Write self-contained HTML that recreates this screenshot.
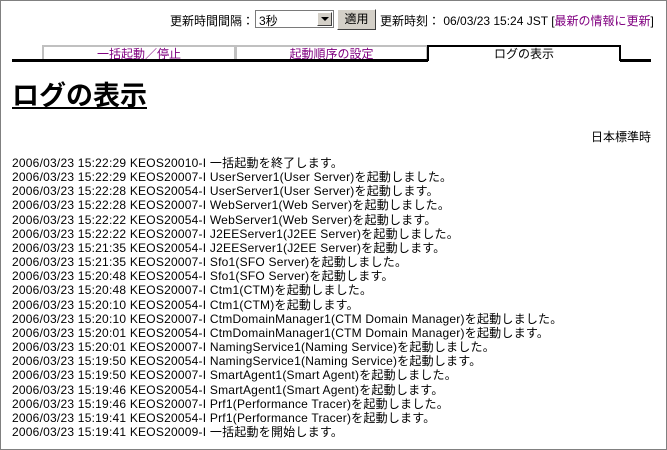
<!DOCTYPE html>
<html><head><meta charset="utf-8"><style>
html,body{margin:0;padding:0;background:#fff;}
body{width:667px;height:450px;position:relative;overflow:hidden;font-family:"Liberation Sans","Noto Sans CJK JP",sans-serif;font-size:12px;color:#000;}
.frame{position:absolute;left:0;top:0;width:665px;height:448px;border:1px solid #808080;}
.a{position:absolute;white-space:nowrap;}
.sel{position:absolute;left:255px;top:10px;width:79px;height:18px;border:1px solid #7a7a7a;box-sizing:border-box;background:#fff;}
.sel span{position:absolute;left:3px;top:1px;}
.sel i{position:absolute;right:1px;top:1px;width:15px;height:14px;background:#d4d0c8;border:1px solid;border-color:#fff #404040 #404040 #fff;box-sizing:border-box;}
.sel i:after{content:"";position:absolute;left:3px;top:4px;border-left:4px solid transparent;border-right:4px solid transparent;border-top:4px solid #000;}
.btn{position:absolute;left:337px;top:9px;width:39px;height:21px;background:#d4d0c8;border:1px solid;border-color:#fff #404040 #404040 #fff;box-sizing:border-box;text-align:center;line-height:18px;}
.p{color:#800080;}
.tab{position:absolute;top:45px;height:15px;border:2px solid #c0c0c0;border-bottom:none;text-align:center;line-height:14px;box-sizing:border-box;color:#800080;}
.log{position:absolute;left:12px;top:156px;line-height:14.15px;white-space:pre;letter-spacing:0.22px;}
</style></head><body>
<div class="frame"></div>
<div class="a" style="left:170px;top:12px;">更新時間間隔：</div>
<div class="sel"><span>3秒</span><i></i></div>
<div class="btn">適用</div>
<div class="a" style="left:380px;top:12px;">更新時刻： 06/03/23 15:24 JST [<span class="p">最新の情報に更新</span>]</div>
<div class="tab" style="left:42px;width:194px;">一括起動／停止</div>
<div class="tab" style="left:235px;width:193px;">起動順序の設定</div>
<div class="tab" style="left:427px;width:194px;border-color:#000;color:#000;height:16px;background:#fff;z-index:2;">ログの表示</div>
<div class="a" style="left:12px;top:59px;width:416px;height:3px;background:#000;"></div>
<div class="a" style="left:620px;top:59px;width:31px;height:3px;background:#000;"></div>
<div class="a" style="left:12px;top:74px;font-size:27px;font-weight:bold;text-decoration:underline;">ログの表示</div>
<div class="a" style="right:16px;top:128px;">日本標準時</div>
<div class="log">2006/03/23 15:22:29 KEOS20010-I 一括起動を終了します。
2006/03/23 15:22:29 KEOS20007-I UserServer1(User Server)を起動しました。
2006/03/23 15:22:28 KEOS20054-I UserServer1(User Server)を起動します。
2006/03/23 15:22:28 KEOS20007-I WebServer1(Web Server)を起動しました。
2006/03/23 15:22:22 KEOS20054-I WebServer1(Web Server)を起動します。
2006/03/23 15:22:22 KEOS20007-I J2EEServer1(J2EE Server)を起動しました。
2006/03/23 15:21:35 KEOS20054-I J2EEServer1(J2EE Server)を起動します。
2006/03/23 15:21:35 KEOS20007-I Sfo1(SFO Server)を起動しました。
2006/03/23 15:20:48 KEOS20054-I Sfo1(SFO Server)を起動します。
2006/03/23 15:20:48 KEOS20007-I Ctm1(CTM)を起動しました。
2006/03/23 15:20:10 KEOS20054-I Ctm1(CTM)を起動します。
2006/03/23 15:20:10 KEOS20007-I CtmDomainManager1(CTM Domain Manager)を起動しました。
2006/03/23 15:20:01 KEOS20054-I CtmDomainManager1(CTM Domain Manager)を起動します。
2006/03/23 15:20:01 KEOS20007-I NamingService1(Naming Service)を起動しました。
2006/03/23 15:19:50 KEOS20054-I NamingService1(Naming Service)を起動します。
2006/03/23 15:19:50 KEOS20007-I SmartAgent1(Smart Agent)を起動しました。
2006/03/23 15:19:46 KEOS20054-I SmartAgent1(Smart Agent)を起動します。
2006/03/23 15:19:46 KEOS20007-I Prf1(Performance Tracer)を起動しました。
2006/03/23 15:19:41 KEOS20054-I Prf1(Performance Tracer)を起動します。
2006/03/23 15:19:41 KEOS20009-I 一括起動を開始します。</div>
</body></html>
